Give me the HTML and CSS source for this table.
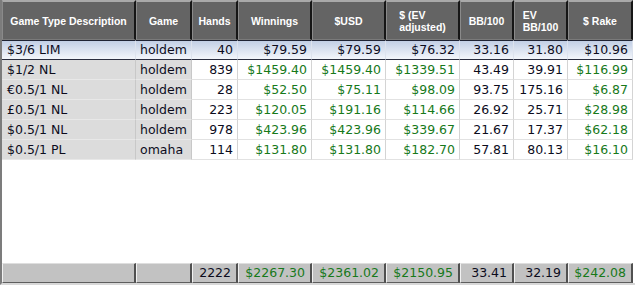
FILE: index.html
```html
<!DOCTYPE html>
<html>
<head>
<meta charset="utf-8">
<link rel="stylesheet" href="styles.css">
</head>
<body>
<div class="grid">
  <div class="row head">
    <div class="hc"><span>Game Type Description</span></div>
    <div class="hc"><span>Game</span></div>
    <div class="hc"><span>Hands</span></div>
    <div class="hc"><span>Winnings</span></div>
    <div class="hc"><span>$USD</span></div>
    <div class="hc"><span>$ (EV<br>adjusted)</span></div>
    <div class="hc"><span>BB/100</span></div>
    <div class="hc"><span>EV<br>BB/100</span></div>
    <div class="hc"><span>$ Rake</span></div>
  </div>
  <div class="row data sel">
    <div class="c t">$3/6 LIM</div><div class="c t">holdem</div><div class="c n">40</div><div class="c n">$79.59</div><div class="c n">$79.59</div><div class="c n">$76.32</div><div class="c n">33.16</div><div class="c n">31.80</div><div class="c n">$10.96</div>
  </div>
  <div class="row data">
    <div class="c t g">$1/2 NL</div><div class="c t g">holdem</div><div class="c n">839</div><div class="c n m">$1459.40</div><div class="c n m">$1459.40</div><div class="c n m">$1339.51</div><div class="c n">43.49</div><div class="c n">39.91</div><div class="c n m">$116.99</div>
  </div>
  <div class="row data">
    <div class="c t g">€0.5/1 NL</div><div class="c t g">holdem</div><div class="c n">28</div><div class="c n m">$52.50</div><div class="c n m">$75.11</div><div class="c n m">$98.09</div><div class="c n">93.75</div><div class="c n">175.16</div><div class="c n m">$6.87</div>
  </div>
  <div class="row data">
    <div class="c t g">£0.5/1 NL</div><div class="c t g">holdem</div><div class="c n">223</div><div class="c n m">$120.05</div><div class="c n m">$191.16</div><div class="c n m">$114.66</div><div class="c n">26.92</div><div class="c n">25.71</div><div class="c n m">$28.98</div>
  </div>
  <div class="row data">
    <div class="c t g">$0.5/1 NL</div><div class="c t g">holdem</div><div class="c n">978</div><div class="c n m">$423.96</div><div class="c n m">$423.96</div><div class="c n m">$339.67</div><div class="c n">21.67</div><div class="c n">17.37</div><div class="c n m">$62.18</div>
  </div>
  <div class="row data">
    <div class="c t g">$0.5/1 PL</div><div class="c t g">omaha</div><div class="c n">114</div><div class="c n m">$131.80</div><div class="c n m">$131.80</div><div class="c n m">$182.70</div><div class="c n">57.81</div><div class="c n">80.13</div><div class="c n m">$16.10</div>
  </div>
  <div class="filler"></div>
  <div class="row foot">
    <div class="fc"></div><div class="fc"></div><div class="fc">2222</div><div class="fc m">$2267.30</div><div class="fc m">$2361.02</div><div class="fc m">$2150.95</div><div class="fc">33.41</div><div class="fc">32.19</div><div class="fc m">$242.08</div>
  </div>
</div>
</body>
</html>
```
FILE: styles.css
```css
html, body {
  margin: 0;
  padding: 0;
  background: #ffffff;
}
.grid {
  width: 635px;
  height: 285px;
  box-sizing: border-box;
  border-left: 2px solid #7c7c7c;
  border-bottom: 2px solid #d8d8d8;
  display: flex;
  flex-direction: column;
  font-family: "DejaVu Sans", Verdana, sans-serif;
  font-size: 12.5px;
  color: #0c0c1c;
  background: #ffffff;
}
.row {
  display: grid;
  grid-template-columns: 134px 56px 46px 74px 74px 74px 54px 54px 65px;
}
.head {
  height: 40px;
}
.hc {
  box-sizing: border-box;
  background: #646464;
  border-top: 2px solid #a9a9a9;
  border-left: 1px solid #8a8a8a;
  border-right: 2px solid #161616;
  border-bottom: 1px solid #7a7a7a;
  display: flex;
  align-items: center;
  justify-content: center;
  color: #ffffff;
  font-family: "Liberation Sans", Arial, sans-serif;
  font-weight: bold;
  font-size: 10.5px;
  line-height: 12px;
}
.hc span {
  text-align: left;
}
.data {
  height: 20px;
}
.c {
  box-sizing: border-box;
  border-right: 1px solid #d4d4d4;
  border-bottom: 1px solid #e2e2e2;
  line-height: 19px;
  white-space: nowrap;
  background: #ffffff;
}
.t {
  padding-left: 5px;
}
.c.t:nth-child(2) {
  padding-left: 4px;
}
.g {
  background: #dcdcdc;
  border-right-color: #c8c8c8;
  border-bottom-color: #e8e8e8;
}
.n {
  text-align: right;
  padding-right: 4px;
}
.m {
  color: #17791a;
}
.sel .c {
  background: linear-gradient(#c2cfe5, #f3f6fb);
  border-top: 1px solid #1f2333;
  border-bottom: 1px solid #2a2e40;
  border-right-color: #dde3ee;
  line-height: 18px;
}
.filler {
  flex: 1;
}
.foot {
  height: 20px;
}
.fc {
  box-sizing: border-box;
  background: #c2c2c2;
  border-top: 1px solid #dedede;
  border-left: 1px solid #f2f2f2;
  border-right: 2px solid #505050;
  border-bottom: 1px solid #5e5e5e;
  text-align: right;
  padding-right: 5px;
  line-height: 18px;
  white-space: nowrap;
}
```
